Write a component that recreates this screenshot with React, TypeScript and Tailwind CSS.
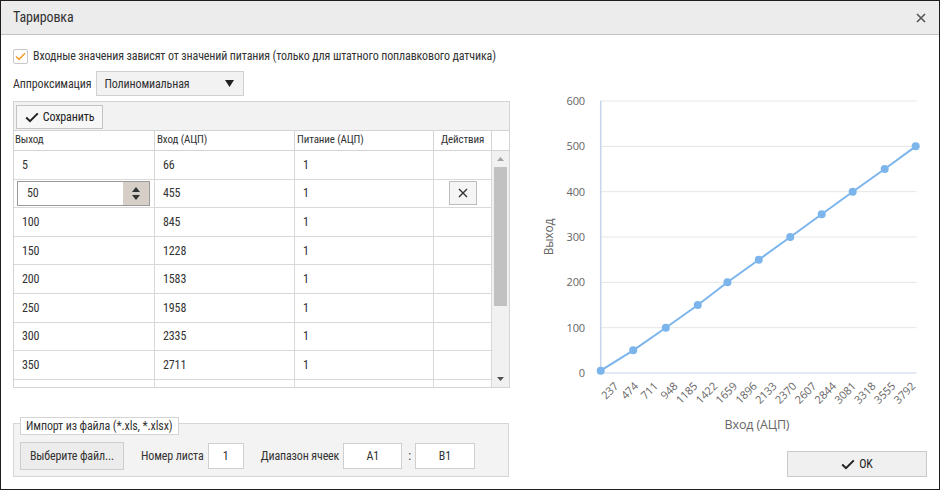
import React from "react";

const rows: [number, number][] = [
  [5, 66],
  [50, 455],
  [100, 845],
  [150, 1228],
  [200, 1583],
  [250, 1958],
  [300, 2335],
  [350, 2711],
  [400, 3082],
];

const chartPts: [number, number][] = [
  [66, 5],
  [455, 50],
  [845, 100],
  [1228, 150],
  [1583, 200],
  [1958, 250],
  [2335, 300],
  [2711, 350],
  [3082, 400],
  [3465, 450],
  [3836, 500],
];

const X0 = 600.7;
const SX = 0.08355;
const px = (v: number) => X0 + (v - 66) * SX;
const py = (v: number) => 373 - v * 0.4533;

function Check({ className }: { className?: string }) {
  return (
    <svg width="14" height="11" viewBox="0 0 14 11" className={className}>
      <path d="M1.2 5.6 L5 9.2 L12.8 1.4" fill="none" stroke="currentColor" strokeWidth="2" />
    </svg>
  );
}

function Chart() {
  const yTicks = [0, 100, 200, 300, 400, 500, 600];
  const xTicks = Array.from({ length: 16 }, (_, i) => 237 * (i + 1));
  const d = chartPts.map((p, i) => `${i ? "L" : "M"}${px(p[0]).toFixed(1)} ${py(p[1]).toFixed(1)}`).join(" ");
  return (
    <svg width="429" height="355" viewBox="509 88 429 355" fontFamily="'Open Sans', sans-serif">
      {yTicks.map((t) => (
        <g key={t}>
          {t > 0 && <line x1={X0} x2={916.7} y1={py(t)} y2={py(t)} stroke="#e6e6e6" strokeWidth="1" />}
          <text x={585} y={py(t) + 4} textAnchor="end" fontSize="11" fill="#666">
            {t}
          </text>
        </g>
      ))}
      <line x1={X0} x2={X0} y1={100.7} y2={373} stroke="#c5d5ea" strokeWidth="1.5" />
      <line x1={X0} x2={916.7} y1={373} y2={373} stroke="#c5d5ea" strokeWidth="1" />
      {xTicks.map((t) => {
        const x = px(t) + 4;
        const y = 387;
        return (
          <text key={t} x={x} y={y} textAnchor="end" fontSize="11" fill="#666" transform={`rotate(-45 ${x} ${y})`}>
            {t}
          </text>
        );
      })}
      <path d={d} fill="none" stroke="#7cb5ec" strokeWidth="2" />
      {chartPts.map((p, i) => (
        <circle key={i} cx={px(p[0])} cy={py(p[1])} r="4" fill="#7cb5ec" />
      ))}
      <text x={553} y={237} textAnchor="middle" fontSize="12" fill="#666" transform="rotate(-90 553 237)">
        Выход
      </text>
      <text x={757} y={429} textAnchor="middle" fontSize="12.5" fill="#666">
        Вход (АЦП)
      </text>
    </svg>
  );
}

export default function App() {
  return (
    <div className="w-[940px] h-[490px] border border-[#1e1e1e] bg-white flex flex-col text-[12px] tracking-[-0.13px] text-[#333] font-['Roboto_Condensed','Liberation_Sans_Narrow',Roboto,sans-serif] overflow-hidden">
      <div className="h-[34px] shrink-0 bg-[#ececec] border-b border-[#c4c4c4] flex items-center justify-between pl-[12px] pr-[13px]">
        <span className="text-[14px] text-[#333]">Тарировка</span>
        <svg width="10" height="10" viewBox="0 0 10 10">
          <path d="M1 1 L9 9 M9 1 L1 9" stroke="#555" strokeWidth="1.6" />
        </svg>
      </div>
      <div className="flex flex-1">
        <div className="w-[508px] shrink-0 pl-[12px] pt-[11px] flex flex-col">
          <div className="h-[20px] flex items-center">
            <div className="w-[15px] h-[15px] border border-[#c8c8c8] rounded-[2px] bg-white flex items-center justify-center text-[#f0a030]">
              <svg width="11" height="9" viewBox="0 0 11 9">
                <path d="M1 4.5 L4 7.3 L10 1.2" fill="none" stroke="#f0a030" strokeWidth="1.6" />
              </svg>
            </div>
            <span className="ml-[5px]">Входные значения зависят от значений питания (только для штатного поплавкового датчика)</span>
          </div>
          <div className="mt-[5px] h-[25px] flex items-center">
            <span>Аппроксимация</span>
            <div className="ml-[5px] w-[148px] h-[25px] bg-[#f2f2f2] border border-[#d0d0d0] flex items-center justify-between pl-[7px] pr-[9px]">
              <span>Полиномиальная</span>
              <svg width="9" height="7" viewBox="0 0 9 7">
                <path d="M0 0 L9 0 L4.5 7 Z" fill="#222" />
              </svg>
            </div>
          </div>
          <div className="mt-[5px] w-[497px] h-[287px] border border-[#d4d4d4] flex flex-col">
            <div className="h-[29px] shrink-0 bg-[#f2f2f2] border-b border-[#d4d4d4] pl-[2px] pt-[3px]">
              <div className="w-[87px] h-[24px] bg-[#f7f7f7] border border-[#c4c4c4] flex items-center justify-center gap-[4px] text-[#222]">
                <Check />
                <span>Сохранить</span>
              </div>
            </div>
            <div className="h-[20px] shrink-0 flex border-b border-[#d4d4d4] text-[11px]">
              <div className="w-[141px] border-r border-[#d4d4d4] pl-[1px] flex items-center">Выход</div>
              <div className="w-[140px] border-r border-[#d4d4d4] pl-[2px] flex items-center">Вход (АЦП)</div>
              <div className="w-[139px] border-r border-[#d4d4d4] pl-[2px] flex items-center">Питание (АЦП)</div>
              <div className="w-[58px] border-r border-[#d4d4d4] flex items-center justify-center">Действия</div>
              <div className="flex-1" />
            </div>
            <div className="flex-1 flex overflow-hidden">
              <div className="w-[478px] overflow-hidden">
                {rows.map(([out, inp], i) => (
                  <div key={i} className="h-[28.6px] flex border-b border-[#d9d9d9]">
                    <div className="w-[141px] border-r border-[#d9d9d9] flex items-center">
                      {i === 1 ? (
                        <div className="ml-[3px] w-[133px] h-[25px] border border-[#9a9a9a] bg-white flex items-stretch">
                          <span className="flex-1 pl-[9px] flex items-center">{out}</span>
                          <div className="w-[26px] bg-[#d5cfc8] flex flex-col items-center justify-center gap-[3px]">
                            <svg width="8" height="5" viewBox="0 0 8 5">
                              <path d="M0 5 L8 5 L4 0 Z" fill="#333" />
                            </svg>
                            <svg width="8" height="5" viewBox="0 0 8 5">
                              <path d="M0 0 L8 0 L4 5 Z" fill="#333" />
                            </svg>
                          </div>
                        </div>
                      ) : (
                        <span className="pl-[8px]">{out}</span>
                      )}
                    </div>
                    <div className="w-[140px] border-r border-[#d9d9d9] pl-[8px] flex items-center">{inp}</div>
                    <div className="w-[139px] border-r border-[#d9d9d9] pl-[8px] flex items-center">1</div>
                    <div className="w-[58px] border-r border-[#d9d9d9] flex items-center justify-center">
                      {i === 1 && (
                        <div className="w-[28px] h-[24px] bg-[#f5f5f5] border border-[#bdbdbd] flex items-center justify-center">
                          <svg width="10" height="10" viewBox="0 0 10 10">
                            <path d="M1 1 L9 9 M9 1 L1 9" stroke="#333" strokeWidth="1.4" />
                          </svg>
                        </div>
                      )}
                    </div>
                  </div>
                ))}
              </div>
              <div className="w-[17px] bg-[#f1f1f1] flex flex-col items-center">
                <div className="h-[16px] flex items-center justify-center">
                  <svg width="7" height="4" viewBox="0 0 7 4">
                    <path d="M0 4 L7 4 L3.5 0 Z" fill="#a3a3a3" />
                  </svg>
                </div>
                <div className="w-[13px] h-[139px] bg-[#c1c1c1]" />
                <div className="flex-1" />
                <div className="h-[16px] flex items-center justify-center">
                  <svg width="7" height="4" viewBox="0 0 7 4">
                    <path d="M0 0 L7 0 L3.5 4 Z" fill="#505050" />
                  </svg>
                </div>
              </div>
            </div>
          </div>
          <div className="mt-[29px] flex flex-col w-[496px]">
            <div className="relative z-10 ml-[7px] self-start h-[18px] bg-white border border-[#d4d4d4] flex items-center px-[5px] whitespace-nowrap text-[#333]">
              Импорт из файла (*.xls, *.xlsx)
            </div>
            <div className="-mt-[12px] h-[54px] bg-[#f3f3f3] border border-[#d6d6d6] flex items-center pl-[6px] pt-[12px] whitespace-nowrap">
              <div className="w-[104px] h-[28px] bg-[#ececec] border border-[#cdcdcd] flex items-center justify-center">Выберите файл...</div>
              <span className="ml-[17px]">Номер листа</span>
              <div className="ml-[4px] w-[36px] h-[26px] bg-white border border-[#cfcfcf] flex items-center justify-center">1</div>
              <span className="ml-[17px]">Диапазон ячеек</span>
              <div className="ml-[4px] w-[59px] h-[26px] bg-white border border-[#cfcfcf] flex items-center justify-center">A1</div>
              <span className="ml-[6px]">:</span>
              <div className="ml-[4px] w-[60px] h-[26px] bg-white border border-[#cfcfcf] flex items-center justify-center">B1</div>
            </div>
          </div>
        </div>
        <div className="flex-1 flex flex-col">
          <div className="mt-[53px]">
            <Chart />
          </div>
          <div className="mt-[8px] flex justify-end pr-[12px]">
            <div className="w-[140px] h-[26px] bg-[#f0f0f0] border border-[#c9c9c9] flex items-center justify-center gap-[4px] text-[#222]">
              <Check />
              <span>OK</span>
            </div>
          </div>
        </div>
      </div>
    </div>
  );
}
